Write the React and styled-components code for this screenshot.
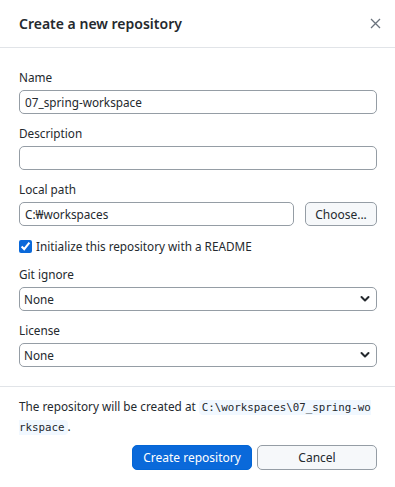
import React from 'react';
import styled, { createGlobalStyle } from 'styled-components';

const Global = createGlobalStyle`
  html, body {
    margin: 0;
    background: #fff;
  }
  body {
    font-family: "Noto Sans", "Noto Sans CJK KR", sans-serif;
    font-size: 11.75px;
    color: #24292e;
  }
`;

const S = {};
S.Dialog = styled('div')`
  width: 395px;
  height: 487px;
  background: #fff;
  display: flex;
  flex-direction: column;
`;
S.Header = styled('div')`
  height: 47px;
  padding: 0 12px 0 19px;
  border-bottom: 1px solid #e1e4e8;
  display: flex;
  align-items: center;
  justify-content: space-between;
  & > h1 {
    margin: 0;
    font-size: 14px;
    font-weight: 600;
  }
`;
S.Close = styled('button')`
  border: 0;
  background: none;
  padding: 2px;
  display: flex;
  color: #6a737d;
  cursor: pointer;
`;
S.Body = styled('div')`
  padding: 21px 18px 19px 19px;
  border-bottom: 1px solid #e1e4e8;
  display: flex;
  flex-direction: column;
  gap: 11.2px;
`;
S.Field = styled('div')`
  display: flex;
  flex-direction: column;
  & > label {
    line-height: 16px;
    margin-bottom: 5px;
  }
`;
S.Row = styled('div')`
  display: flex;
  gap: 11px;
  & > input {
    flex: 1;
    min-width: 0;
  }
`;
S.Input = styled('input')`
  height: 24px;
  box-sizing: border-box;
  border: 1px solid #959da5;
  border-radius: 5px;
  padding: 0 5px;
  font: inherit;
  color: #24292e;
  outline: none;
`;
S.Button = styled('button')`
  height: ${p => p.$h || 24}px;
  width: ${p => p.$w}px;
  box-sizing: border-box;
  border-radius: 5px;
  font: inherit;
  font-size: 12px;
  border: 1px solid ${p => p.$primary ? '#0366d6' : '#959da5'};
  background: ${p => p.$primary ? '#0a69da' : '#f6f8fa'};
  color: ${p => p.$primary ? '#fff' : '#24292e'};
  padding: 0;
  cursor: pointer;
`;
S.Check = styled('label')`
  display: flex;
  align-items: center;
  gap: 4px;
  height: 17px;
  & > input {
    margin: 0;
    width: 13px;
    height: 13px;
    accent-color: #0a69da;
  }
`;
S.SelectWrap = styled('div')`
  position: relative;
  display: flex;
  & > svg {
    position: absolute;
    right: 7px;
    top: 8px;
    pointer-events: none;
  }
`;
S.Select = styled('select')`
  flex: 1;
  appearance: none;
  height: 24px;
  border: 1px solid #959da5;
  border-radius: 5px;
  padding: 0 4px;
  background: #fff;
  font: inherit;
  color: #24292e;
  outline: none;
`;
S.Footer = styled('div')`
  padding: 10px 18px 0 19px;
  display: flex;
  flex-direction: column;
  gap: 8px;
`;
S.Note = styled('p')`
  margin: 0;
  line-height: 19px;
  word-break: break-all;
  & > code {
    font-family: "DejaVu Sans Mono", monospace;
    font-size: 10.8px;
    background: #f1f8ff;
    border-radius: 4px;
    padding: 1px 3px;
  }
`;
S.Actions = styled('div')`
  display: flex;
  justify-content: flex-end;
  gap: 5px;
`;

const Chevron = () => (
  <svg width="10" height="8" viewBox="0 0 10 8">
    <path d="M1.5 2L5 5.5 8.5 2" fill="none" stroke="#24292e" strokeWidth="2" strokeLinecap="round" strokeLinejoin="round" />
  </svg>
);

const Dropdown = ({ id }) => (
  <S.SelectWrap>
    <S.Select id={id} defaultValue="None">
      <option>None</option>
    </S.Select>
    <Chevron />
  </S.SelectWrap>
);

export default function App() {
  return (
    <S.Dialog>
      <Global />
      <S.Header>
        <h1>Create a new repository</h1>
        <S.Close aria-label="Close">
          <svg width="11" height="11" viewBox="0 0 11 11">
            <path d="M1 1l9 9M10 1l-9 9" stroke="currentColor" strokeWidth="1.3" />
          </svg>
        </S.Close>
      </S.Header>
      <S.Body>
        <S.Field>
          <label htmlFor="name">Name</label>
          <S.Input id="name" defaultValue="07_spring-workspace" />
        </S.Field>
        <S.Field>
          <label htmlFor="desc">Description</label>
          <S.Input id="desc" />
        </S.Field>
        <S.Field>
          <label htmlFor="path">Local path</label>
          <S.Row>
            <S.Input id="path" defaultValue="C:₩workspaces" />
            <S.Button $w={72}>Choose...</S.Button>
          </S.Row>
        </S.Field>
        <S.Check>
          <input type="checkbox" defaultChecked />
          Initialize this repository with a README
        </S.Check>
        <S.Field>
          <label htmlFor="gitignore">Git ignore</label>
          <Dropdown id="gitignore" />
        </S.Field>
        <S.Field>
          <label htmlFor="license">License</label>
          <Dropdown id="license" />
        </S.Field>
      </S.Body>
      <S.Footer>
        <S.Note>
          The repository will be created at <code>C:\workspaces\07_spring-workspace</code>.
        </S.Note>
        <S.Actions>
          <S.Button $primary $w={120} $h={25}>Create repository</S.Button>
          <S.Button $w={120} $h={25}>Cancel</S.Button>
        </S.Actions>
      </S.Footer>
    </S.Dialog>
  );
}
